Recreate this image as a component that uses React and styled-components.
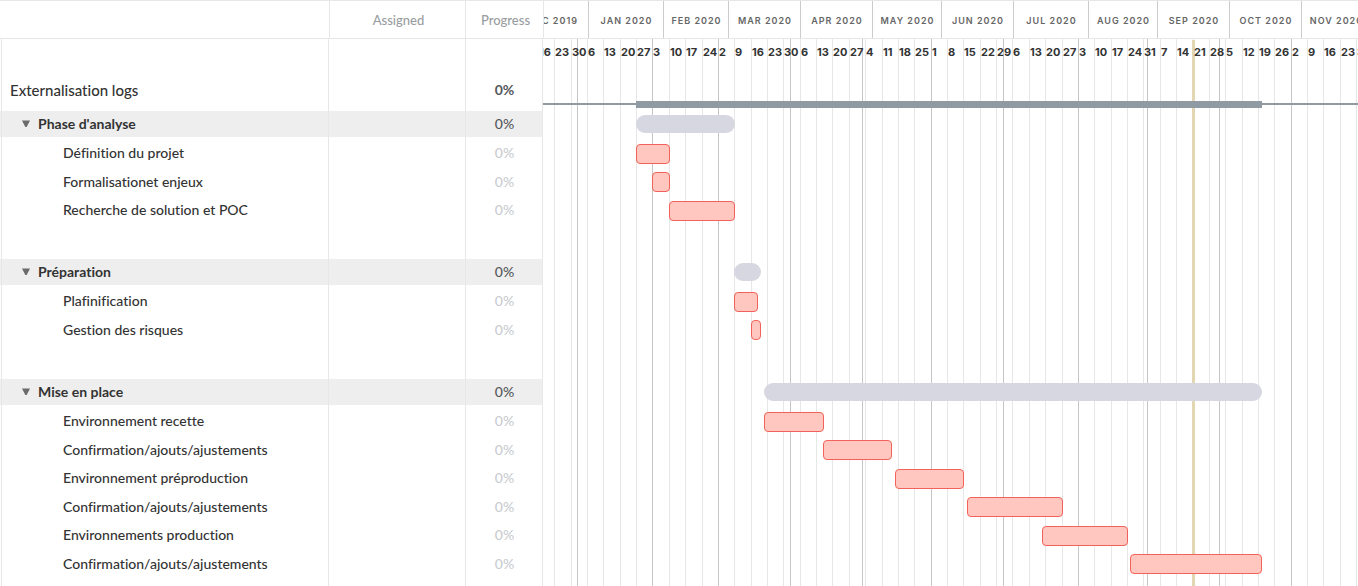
import React, { useState } from "react";
import styled, { createGlobalStyle } from "styled-components";

const GlobalStyle = createGlobalStyle`
  *, *::before, *::after { box-sizing: border-box; }
  body {
    margin: 0;
    background: #fff;
    color: #333;
    font-family: Lato, "Open Sans", sans-serif;
    font-size: 14px;
    font-variant-ligatures: none;
  }
`;

/* ---------- time scale: working days counted from Monday 16 Dec 2019 ---------- */

const DAY_WIDTH = 3.2734;
const SCROLLED = 4.66;
const MONTH_LABEL_SHIFT = 10.5;

const at = (day, shift = 0) => Math.floor(day * DAY_WIDTH - SCROLLED + shift);

const MONTHS = [
  { label: "DEC 2019", start: -10 },
  { label: "JAN 2020", start: 12 },
  { label: "FEB 2020", start: 35 },
  { label: "MAR 2020", start: 55 },
  { label: "APR 2020", start: 77 },
  { label: "MAY 2020", start: 99 },
  { label: "JUN 2020", start: 120 },
  { label: "JUL 2020", start: 142 },
  { label: "AUG 2020", start: 165 },
  { label: "SEP 2020", start: 186 },
  { label: "OCT 2020", start: 208 },
  { label: "NOV 2020", start: 230 },
].map((month, i, all) => ({
  ...month,
  end: i + 1 < all.length ? all[i + 1].start : 251,
}));

const WEEKS = Array.from({ length: 51 }, (_, i) => ({
  day: new Date(Date.UTC(2019, 11, 16 + i * 7)).getUTCDate(),
  start: i * 5,
}));

const TODAY = 200;

const PROJECT = { name: "Externalisation logs", progress: "0%", from: 30, to: 221 };

const PHASES = [
  {
    name: "Phase d'analyse",
    from: 30,
    to: 60,
    tasks: [
      { name: "Définition du projet", from: 30, to: 40 },
      { name: "Formalisationet enjeux", from: 35, to: 40 },
      { name: "Recherche de solution et POC", from: 40, to: 60 },
      null,
    ],
  },
  {
    name: "Préparation",
    from: 60,
    to: 68,
    tasks: [
      { name: "Plafinification", from: 60, to: 67 },
      { name: "Gestion des risques", from: 65, to: 68 },
      null,
    ],
  },
  {
    name: "Mise en place",
    from: 69,
    to: 221,
    tasks: [
      { name: "Environnement recette", from: 69, to: 87 },
      { name: "Confirmation/ajouts/ajustements", from: 87, to: 108 },
      { name: "Environnement préproduction", from: 109, to: 130 },
      { name: "Confirmation/ajouts/ajustements", from: 131, to: 160 },
      { name: "Environnements production", from: 154, to: 180 },
      { name: "Confirmation/ajouts/ajustements", from: 181, to: 221 },
    ],
  },
];

/* ---------- shared frame ---------- */

const Page = styled.main`
  display: flex;
  min-height: 100vh;
  overflow: hidden;
`;

const HeadLine = `
  display: flex;
  height: 39px;
  border-top: 1px solid #e7e7e7;
  border-bottom: 1px solid #e7e7e7;
`;

/* ---------- task list ---------- */

const TaskTable = styled.table`
  position: relative;
  display: flex;
  flex-direction: column;
  flex: none;
  width: 543px;
`;

const TableHead = styled.thead`
  display: block;
`;

const HeadRow = styled.tr`
  ${HeadLine}
`;

const headWidth = { name: "330px", assigned: "136px", progress: "77px" };
const columnWidth = { name: "329px", assigned: "137px", progress: "77px" };

const HeadCell = styled.th`
  display: flex;
  align-items: center;
  justify-content: center;
  width: ${(p) => headWidth[p.$column]};
  padding: 0 0 0 2px;
  border-right: ${(p) => (p.$column === "progress" ? "0" : "1px solid #e7e7e7")};
  color: #999da1;
  font-size: 13px;
  font-weight: 500;
`;

const Group = styled.tbody`
  display: block;
  padding-bottom: ${(p) => (p.$project ? "0" : "6px")};
`;

const phaseHeight = "26px";

const ProjectRow = styled.tr`
  display: flex;
  align-items: flex-end;
  height: 72px;
  padding-bottom: 9px;
  font-size: 15px;
  line-height: 24px;
`;

const PhaseRow = styled.tr`
  display: flex;
  align-items: center;
  height: ${phaseHeight};
  margin-bottom: 2px;
  padding-bottom: 2px;
  background: #eee;
`;

const TaskRow = styled.tr`
  display: flex;
  align-items: center;
  height: ${(p) => (p.$short ? "28px" : "29px")};
  padding-bottom: 2px;
`;

const nameIndent = { project: "10px", phase: "21px", task: "63px" };

const NameCell = styled.td`
  display: flex;
  align-items: center;
  width: ${columnWidth.name};
  padding: 0 0 0 ${(p) => nameIndent[p.$level]};
  font-weight: ${(p) => (p.$level === "phase" ? 700 : 500)};
  white-space: nowrap;
`;

const AssignedCell = styled.td`
  width: ${columnWidth.assigned};
  padding: 0;
`;

const ProgressCell = styled.td`
  width: ${columnWidth.progress};
  padding: 0;
  color: ${(p) => (p.$strong ? "#55585b" : "#c9ccd0")};
  font-size: 14px;
  font-weight: ${(p) => (p.$bold ? 700 : 500)};
  text-align: center;
`;

const Toggle = styled.button`
  display: flex;
  align-items: center;
  justify-content: center;
  width: 10px;
  height: 16px;
  margin-right: 7px;
  padding: 0;
  border: 0;
  background: none;
  color: #6b6b6b;
  cursor: pointer;

  svg {
    transform: ${(p) => (p.$open ? "none" : "rotate(-90deg)")};
  }
`;

const ColumnRules = styled.caption`
  position: absolute;
  top: 39px;
  bottom: 0;
  left: 1px;
  display: flex;
  pointer-events: none;
`;

const ColumnRule = styled.span`
  width: ${(p) => p.$width};
  border-right: 1px solid #e7e7e7;

  &:first-child {
    border-left: 1px solid #e7e7e7;
  }
`;

/* ---------- timeline ---------- */

const Timeline = styled.section`
  position: relative;
  flex: 1;
  min-width: 0;
  overflow: hidden;
`;

const MonthHeader = styled.div`
  ${HeadLine}
  border-left: 1px solid #e7e7e7;
  overflow: hidden;
`;

const Month = styled.div`
  flex: none;
  display: flex;
  align-items: center;
  justify-content: center;
  padding: 2px 0 0 1px;
  border-right: 1px solid #ccc;
  color: #666;
  font-family: Inter, sans-serif;
  font-size: 9px;
  font-weight: 600;
  letter-spacing: 1px;
  white-space: nowrap;
`;

const GridLayer = styled.div`
  position: absolute;
  top: 39px;
  bottom: 0;
  left: 0;
  display: flex;
`;

const GridLine = styled.span`
  flex: none;
  border-left: 1px solid ${(p) => (p.$month ? "#c6c6c6" : "#e7e7e7")};
`;

const TodayLine = styled.div`
  position: absolute;
  top: 40px;
  bottom: 0;
  width: 3px;
  background: #e3d6b3;
`;

const Rows = styled.div`
  position: relative;
`;

const ProjectTrack = styled.div`
  display: flex;
  flex-direction: column;
  height: 72px;
`;

const WeekLabels = styled.div`
  display: flex;
  height: 26px;
  align-items: center;
`;

const WeekLabel = styled.span`
  flex: none;
  padding-left: 1px;
  color: #333;
  font-family: Inter, sans-serif;
  font-size: 11px;
  font-weight: 700;
  line-height: 14px;
  white-space: nowrap;
`;

const ProjectSpan = styled.div`
  display: flex;
  align-items: center;
  height: 7px;
  margin-top: auto;
  margin-bottom: 3px;
  background: linear-gradient(#8f9aa2, #8f9aa2) 0 2px / 100% 2px no-repeat;
`;

const ProjectBar = styled.div`
  height: 7px;
  background: #8f9aa2;
`;

const PhaseTrack = styled.div`
  display: flex;
  align-items: center;
  height: ${phaseHeight};
  margin-bottom: 2px;
`;

const PhaseBar = styled.div`
  height: 18px;
  border-radius: 9px;
  background: #d6d7e0;
`;

const TaskTrack = styled.div`
  display: flex;
  align-items: flex-end;
  height: ${(p) => (p.$short ? "28px" : "29px")};
  padding-bottom: 4px;
`;

const TaskBar = styled.div`
  height: 20px;
  border: 1px solid #f3625a;
  border-radius: 4px;
  background: #ffc7bf;
`;

const PhaseTracks = styled.div`
  padding-bottom: 6px;
`;

const span = ({ from, to }) => ({
  marginLeft: at(from),
  width: at(to) - at(from) + 1,
});

const isShort = (index) => index % 2 === 1;

function Grid({ marks, month }) {
  return (
    <GridLayer aria-hidden="true" style={{ marginLeft: at(marks[0].start) }}>
      {marks.map((mark) => (
        <GridLine
          key={mark.start}
          $month={month}
          style={{ width: at(mark.end ?? mark.start + 5) - at(mark.start) }}
        />
      ))}
    </GridLayer>
  );
}

export default function App() {
  const [closed, setClosed] = useState({});
  const toggle = (name) => setClosed((prev) => ({ ...prev, [name]: !prev[name] }));

  return (
    <>
      <GlobalStyle />
      <Page>
        <TaskTable>
          <ColumnRules aria-hidden="true">
            <ColumnRule $width="328px" />
            <ColumnRule $width="137px" />
            <ColumnRule $width="77px" />
          </ColumnRules>
          <TableHead>
            <HeadRow>
              <HeadCell $column="name" aria-label="Task" />
              <HeadCell $column="assigned">Assigned</HeadCell>
              <HeadCell $column="progress">Progress</HeadCell>
            </HeadRow>
          </TableHead>
          <Group $project>
            <ProjectRow>
              <NameCell $level="project">{PROJECT.name}</NameCell>
              <AssignedCell />
              <ProgressCell $strong $bold>
                {PROJECT.progress}
              </ProgressCell>
            </ProjectRow>
          </Group>
          {PHASES.map((phase) => (
            <Group key={phase.name}>
              <PhaseRow>
                <NameCell $level="phase">
                  <Toggle
                    type="button"
                    $open={!closed[phase.name]}
                    aria-expanded={!closed[phase.name]}
                    aria-label={phase.name}
                    onClick={() => toggle(phase.name)}
                  >
                    <svg width="8" height="7" viewBox="0 0 8 7" aria-hidden="true">
                      <path d="M0 0.5H8L4.7 7H3.3Z" fill="currentColor" />
                    </svg>
                  </Toggle>
                  {phase.name}
                </NameCell>
                <AssignedCell />
                <ProgressCell $strong>0%</ProgressCell>
              </PhaseRow>
              {!closed[phase.name] &&
                phase.tasks.map((task, i) => (
                  <TaskRow key={i} $short={isShort(i)}>
                    <NameCell $level="task">{task?.name}</NameCell>
                    <AssignedCell />
                    <ProgressCell>{task && "0%"}</ProgressCell>
                  </TaskRow>
                ))}
            </Group>
          ))}
        </TaskTable>

        <Timeline aria-label="Timeline">
          <MonthHeader>
            {MONTHS.map((month, i) => {
              const start = at(month.start, MONTH_LABEL_SHIFT);
              const end = at(month.end, MONTH_LABEL_SHIFT);
              return (
                <Month
                  key={month.label}
                  style={{ width: end - start, marginLeft: i === 0 ? start : 0 }}
                >
                  {month.label}
                </Month>
              );
            })}
          </MonthHeader>
          <Grid marks={WEEKS} />
          <Grid marks={MONTHS} month />
          <TodayLine style={{ left: at(TODAY) - 1 }} />
          <Rows>
            <ProjectTrack>
              <WeekLabels>
                {WEEKS.map((week, i) => (
                  <WeekLabel
                    key={week.start}
                    style={{
                      width: at(week.start + 5) - at(week.start),
                      marginLeft: i === 0 ? at(week.start) : 0,
                    }}
                  >
                    {week.day}
                  </WeekLabel>
                ))}
              </WeekLabels>
              <ProjectSpan>
                <ProjectBar style={span(PROJECT)} />
              </ProjectSpan>
            </ProjectTrack>
            {PHASES.map((phase) => (
              <PhaseTracks key={phase.name}>
                <PhaseTrack>
                  <PhaseBar style={span(phase)} />
                </PhaseTrack>
                {!closed[phase.name] &&
                  phase.tasks.map((task, i) => (
                    <TaskTrack key={i} $short={isShort(i)}>
                      {task && <TaskBar style={span(task)} />}
                    </TaskTrack>
                  ))}
              </PhaseTracks>
            ))}
          </Rows>
        </Timeline>
      </Page>
    </>
  );
}
